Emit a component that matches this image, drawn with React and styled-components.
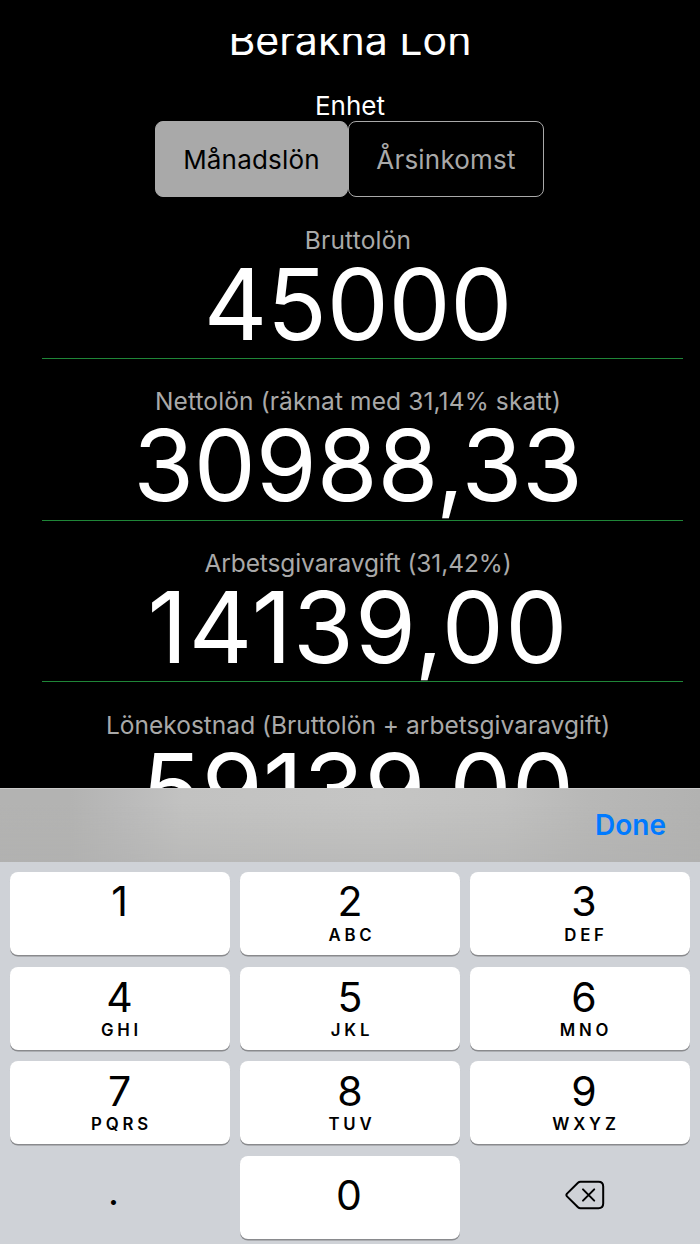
import React, { useState } from 'react'
import styled, { createGlobalStyle } from 'styled-components'

const GlobalStyle = createGlobalStyle`
  * {
    box-sizing: border-box;
  }
  body {
    margin: 0;
    background: #000;
    font-family: Inter, "Liberation Sans", sans-serif;
  }
  button {
    font-family: inherit;
    padding: 0;
    border: none;
  }
`

const Screen = styled.div`
  display: flex;
  flex-direction: column;
  width: 700px;
  height: 1244px;
  padding-top: 34px;
  overflow: hidden;
  background: #000;
`

const Content = styled.main`
  display: flex;
  flex: none;
  flex-direction: column;
  height: 753.5px;
  overflow: hidden;
`

const Title = styled.h1`
  flex: none;
  height: 48px;
  margin: -18.5px 0 0;
  color: #fff;
  font-size: 41.1px;
  font-weight: 400;
  line-height: 48px;
  text-align: center;
`

const UnitLabel = styled.div`
  flex: none;
  margin-top: 25.5px;
  height: 32.3px;
  color: #fff;
  font-size: 26px;
  line-height: 33px;
  text-align: center;
`

const UnitSwitch = styled.div`
  display: flex;
  flex: none;
  justify-content: center;
  height: 76px;
  padding-right: 1px;
`

const UnitButton = styled.button`
  width: ${({ $width }) => $width}px;
  border: 1px solid #a9a9a9;
  border-radius: 8px;
  background: ${({ $active }) => ($active ? '#a9a9a9' : '#000')};
  color: ${({ $active }) => ($active ? '#000' : '#a9a9a9')};
  font-size: 26px;
  letter-spacing: 0.2px;
`

const Fields = styled.div`
  flex: none;
  padding: 0 17px 0 42px;
`

const Field = styled.section`
  height: 161.65px;
  padding: 26.3px 9px 0 0;
  border-bottom: 1px solid #1f8638;
  text-align: center;
  white-space: nowrap;
`

const FieldLabel = styled.div`
  height: 32px;
  color: #a9a9a9;
  font-size: 24.5px;
  letter-spacing: ${({ $spacing }) => $spacing}px;
  line-height: 32px;
`

const Amount = styled.div`
  height: 98px;
  color: #fff;
  font-size: 98.5px;
  letter-spacing: ${({ $spacing }) => $spacing}px;
  line-height: 97px;
`

const Toolbar = styled.div`
  display: flex;
  flex: none;
  align-items: center;
  justify-content: flex-end;
  height: 74.5px;
  padding-right: 34px;
  border-top: 1px solid #cacaca;
  background:
    linear-gradient(to bottom, transparent 20%, rgba(176, 176, 175, 0.5)),
    linear-gradient(to right, #b3b3b2 0%, #b3b3b2 10%, #bababa 18%, #c2c2c1 26%, #c5c5c4 54%, #c1c1c0 72%, #b8b8b7 84%, #b2b2b1 100%);
`

const DoneButton = styled.button`
  background: none;
  color: #007aff;
  font-size: 28px;
  font-weight: 600;
`

const Keyboard = styled.div`
  display: grid;
  flex: none;
  grid-template-columns: repeat(3, 220px);
  grid-auto-rows: 83px;
  gap: 11.7px 10px;
  height: 382px;
  padding: 10px 10px 0;
  background: #cfd2d7;
`

const Key = styled.button`
  display: flex;
  flex-direction: column;
  align-items: center;
  justify-content: ${({ $centered }) => ($centered ? 'center' : 'flex-start')};
  padding: ${({ $centered }) => ($centered ? '0 2px 5px 0' : '5px 0 0')};
  border-radius: 8px;
  background: ${({ $plain }) => ($plain ? 'none' : '#fff')};
  box-shadow: ${({ $plain }) => ($plain ? 'none' : '0 1.5px 0 #898a8d')};
  color: #000;

  &:nth-child(3n) {
    padding-left: ${({ $centered }) => ($centered ? 11 : 8)}px;
  }

  &:nth-child(3n + 1) {
    padding-right: 1px;
  }
`

const Digit = styled.span`
  height: 50px;
  font-size: 41px;
  line-height: ${({ $raised }) => ($raised ? 48 : 50)}px;
`

const Letters = styled.span`
  padding-left: 4px;
  font-size: 16.8px;
  font-weight: 600;
  letter-spacing: 3.8px;
  line-height: 16px;
`

const DecimalPoint = styled.span`
  padding: 0 12px 9px 0;
  font-size: 38px;
  line-height: 50px;
`

const BackspaceIcon = () => (
  <svg width="40" height="30" viewBox="0 0 40 30" fill="none" stroke="#000" strokeWidth="2" strokeLinecap="round" strokeLinejoin="round">
    <path d="M15.5 1.8H33.5Q38.2 1.8 38.2 6.5V23.5Q38.2 28.2 33.5 28.2H15.5Q14 28.2 13 27.2L2 16.4Q.8 15 2 13.6L13 2.8Q14 1.8 15.5 1.8Z" />
    <path d="M18 9.4L29.2 20.6M29.2 9.4L18 20.6" />
  </svg>
)

const fields = [
  { label: 'Bruttolön', labelSpacing: 0.2, amount: '45000', amountSpacing: -0.3 },
  { label: 'Nettolön (räknat med 31,14% skatt)', labelSpacing: 0.12, amount: '30988,33', amountSpacing: -0.2 },
  { label: 'Arbetsgivaravgift (31,42%)', labelSpacing: -0.1, amount: '14139,00', amountSpacing: 1.2 },
  { label: 'Lönekostnad (Bruttolön + arbetsgivaravgift)', labelSpacing: 0.02, amount: '59139,00', amountSpacing: 0.3 },
]

const keys = [
  ['1', ''], ['2', 'ABC'], ['3', 'DEF'],
  ['4', 'GHI'], ['5', 'JKL'], ['6', 'MNO'],
  ['7', 'PQRS'], ['8', 'TUV'], ['9', 'WXYZ'],
]

const App = () => {
  const [unit, setUnit] = useState('month')

  return (
    <>
      <GlobalStyle />
      <Screen>
        <Content>
          <Title>Beräkna Lön</Title>
          <UnitLabel>Enhet</UnitLabel>
          <UnitSwitch>
            <UnitButton $width={193} $active={unit === 'month'} onClick={() => setUnit('month')}>Månadslön</UnitButton>
            <UnitButton $width={196} $active={unit === 'year'} onClick={() => setUnit('year')}>Årsinkomst</UnitButton>
          </UnitSwitch>
          <Fields>
            {fields.map(({ label, labelSpacing, amount, amountSpacing }) => (
              <Field key={label}>
                <FieldLabel $spacing={labelSpacing}>{label}</FieldLabel>
                <Amount $spacing={amountSpacing}>{amount}</Amount>
              </Field>
            ))}
          </Fields>
        </Content>
        <Toolbar>
          <DoneButton>Done</DoneButton>
        </Toolbar>
        <Keyboard>
          {keys.map(([digit, letters], i) => (
            <Key key={digit}>
              <Digit $raised={i < 3}>{digit}</Digit>
              <Letters>{letters}</Letters>
            </Key>
          ))}
          <Key $plain $centered><DecimalPoint>.</DecimalPoint></Key>
          <Key $centered><Digit>0</Digit></Key>
          <Key $plain $centered aria-label="Delete"><BackspaceIcon /></Key>
        </Keyboard>
      </Screen>
    </>
  )
}

export default App
